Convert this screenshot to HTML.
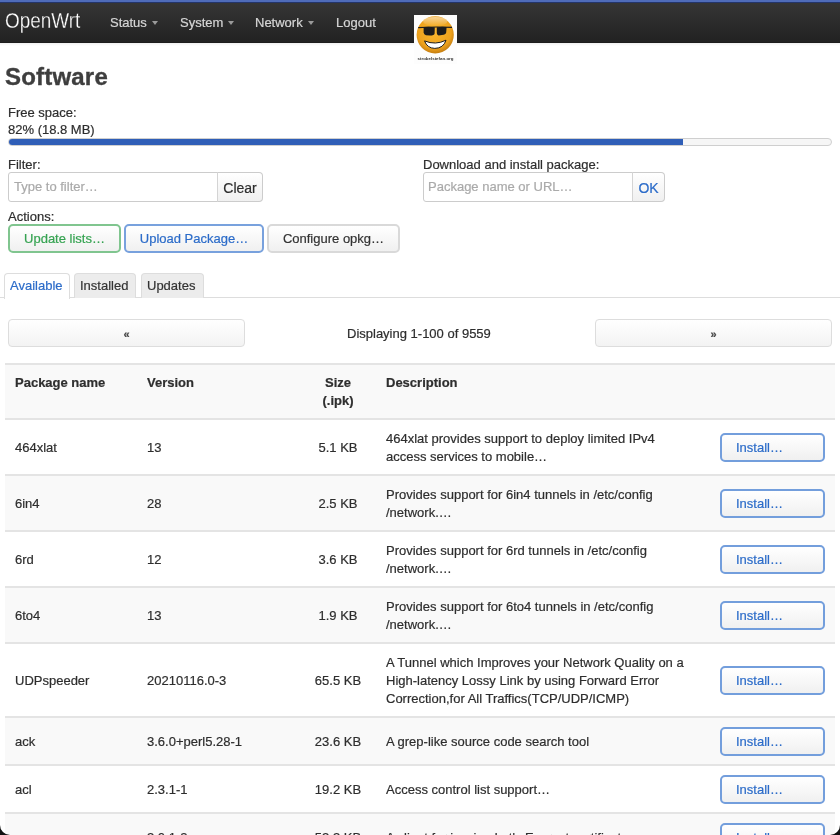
<!DOCTYPE html>
<html><head><meta charset="utf-8">
<style>
*{box-sizing:border-box;margin:0;padding:0}
html,body{width:840px;height:835px;overflow:hidden;background:#fff}
body{font-family:"Liberation Sans",sans-serif;font-size:13px;line-height:18px;color:#2e2e2e;position:relative;-webkit-text-stroke:0.2px}
.abs{position:absolute}
#topline{left:0;top:0;width:840px;height:2px;background:#4f6cb9}
#topline2{left:0;top:2px;width:840px;height:1px;background:#24356a}
#nav{left:0;top:3px;width:840px;height:40px;background:linear-gradient(#353535,#222);border-bottom:1px solid #1d1d1d}
#navshadow{left:0;top:43px;width:840px;height:3px;background:linear-gradient(rgba(0,0,0,0.06),rgba(0,0,0,0))}
#brand{left:5px;top:8px;font-size:22px;line-height:26px;color:#fff;transform-origin:0 0;transform:scaleX(0.86);letter-spacing:0;-webkit-text-stroke:0.3px #2c2c2c}
.nv{top:14px;color:#d6d6d6;font-size:13px;line-height:18px;white-space:nowrap}
.caret{display:inline-block;width:0;height:0;border-left:3.5px solid transparent;border-right:3.5px solid transparent;border-top:4px solid #9a9a9a;vertical-align:middle;margin-left:5px;position:relative;top:-1px}
#logo{left:414px;top:15px;width:43px;height:49px;background:#fdfdfd}
h2{position:absolute;left:5px;top:63px;font-size:24px;line-height:28px;font-weight:bold;color:#3e3e3e;letter-spacing:0.2px;-webkit-text-stroke:0.35px #3e3e3e}
.lbl{position:absolute;white-space:nowrap}
#bar{left:8px;top:138px;width:824px;height:8px;border:1px solid #cfcfcf;border-radius:4px;background:#f6f6f6}
#fill{left:9px;top:139px;width:674px;height:6px;background:#2f5eb7;border-radius:3px 0 0 3px}
.inp{position:absolute;height:30px;border:1px solid #ccc;border-radius:3px 0 0 3px;background:#fff;color:#aaa;padding-left:5px;line-height:28px;white-space:nowrap}
.ibtn{position:absolute;height:30px;border:1px solid #ccc;border-left:1px solid #d4d4d4;border-radius:0 4px 4px 0;background:linear-gradient(#fff,#f0f0f0);line-height:30px;text-align:center;white-space:nowrap;font-size:14px}
.btn{position:absolute;height:29px;border:2px solid #d9d9d9;border-radius:5px;background:linear-gradient(#fff,#f0f0f0);line-height:25px;text-align:center;white-space:nowrap;color:#333}
.green{border-color:#80c58f;color:#36a352}
.blue{border-color:#78a1dd;color:#2c6cc9}
.tab{position:absolute;top:273px;height:25px;border:1px solid #ddd;border-bottom:none;border-radius:4px 4px 0 0;background:#ececec;line-height:24px;padding-left:5px;white-space:nowrap;color:#333}
#tabline{left:0;top:297px;width:840px;height:1px;background:#ddd}
.pbtn{position:absolute;top:319px;height:28px;border:1px solid #ddd;border-radius:4px;background:linear-gradient(#fff,#f3f3f3);text-align:center;line-height:26px;padding-top:1px;font-size:11px;font-weight:bold;color:#444}
table{position:absolute;left:5px;top:363px;width:830px;border-collapse:collapse;table-layout:fixed}
td,th{padding:10px 10px 8px;vertical-align:middle;text-align:left;border-top:2px solid #e4e4e4}
th{font-weight:bold;background:#f9f9f9;padding-top:9px;padding-bottom:8px;vertical-align:top}
tr.r2 td{background:#f9f9f9}
td.c,th.c{text-align:center}
td:nth-child(4){padding-right:20px}
.inst{display:block;width:105px;height:29px;margin-top:-1px;border:2px solid #739edc;border-radius:5px;background:linear-gradient(#fff,#f0f0f0);color:#2c6cc9;line-height:25px;padding-left:14px;white-space:nowrap}
#cornerL{left:0;top:795px;width:40px;height:40px}
#cornerR{left:800px;top:795px;width:40px;height:40px}
</style></head><body><div style="position:absolute;left:0;top:0;width:840px;height:835px;will-change:transform;background:#fff">
<div class="abs" id="topline"></div>
<div class="abs" id="topline2"></div>
<div class="abs" id="nav"></div>
<div class="abs" id="navshadow"></div>
<div class="abs" id="brand">OpenWrt</div>
<div class="abs nv" style="left:110px">Status<span class="caret"></span></div>
<div class="abs nv" style="left:180px">System<span class="caret"></span></div>
<div class="abs nv" style="left:255px">Network<span class="caret"></span></div>
<div class="abs nv" style="left:336px">Logout</div>
<div class="abs" id="logo">
<svg width="43" height="49" viewBox="0 0 43 49">
<defs>
<radialGradient id="fg" cx="0.48" cy="0.42" r="0.62">
<stop offset="0" stop-color="#f8b62e"/><stop offset="0.72" stop-color="#eea21d"/><stop offset="1" stop-color="#b8720c"/>
</radialGradient>
<linearGradient id="hl" x1="0" y1="0" x2="0" y2="1"><stop offset="0" stop-color="#fff" stop-opacity="0.55"/><stop offset="1" stop-color="#fff" stop-opacity="0"/></linearGradient>
</defs>
<circle cx="21.2" cy="19.8" r="18.6" fill="url(#fg)"/>
<ellipse cx="21.2" cy="6.5" rx="12" ry="4.5" fill="url(#hl)"/>
<path d="M4.2 12.6 Q21 11.5 38 12.4" stroke="#1e1e1e" stroke-width="1.1" fill="none"/>
<path d="M9.6 12 Q15 11.2 20.8 12.2 L20.6 18.5 Q20.2 20.5 16 20.6 L12 20.2 Q9.8 19.6 9.6 17.2 Z" fill="#1c1c1c"/>
<path d="M22.8 12.2 Q28 11.2 32.6 12 L32.2 17.5 Q31.8 19.8 28 20.1 L24.5 20.4 Q22.8 20 22.8 18 Z" fill="#1c1c1c"/>
<path d="M10.5 25.9 Q21.5 30.5 32 25.2 Q29.5 33.2 20.8 33.4 Q13.2 33.2 10.5 25.9 Z" fill="#fff" stroke="#1a1a1a" stroke-width="1"/>
<text x="21.5" y="45.3" font-size="4.3" text-anchor="middle" fill="#333" font-family="Liberation Sans" font-weight="bold" style="-webkit-text-stroke:0" textLength="36" lengthAdjust="spacingAndGlyphs">strobelstefan.org</text>
</svg>
</div>

<h2>Software</h2>
<div class="lbl" style="left:8px;top:104px">Free space:</div>
<div class="lbl" style="left:8px;top:121px">82% (18.8 MB)</div>
<div class="abs" id="bar"></div>
<div class="abs" id="fill"></div>

<div class="lbl" style="left:8px;top:156px">Filter:</div>
<div class="inp" style="left:8px;top:172px;width:210px">Type to filter…</div>
<div class="ibtn" style="left:217px;top:172px;width:46px">Clear</div>

<div class="lbl" style="left:423px;top:156px">Download and install package:</div>
<div class="inp" style="left:423px;top:172px;width:210px;padding-left:4px">Package name or URL…</div>
<div class="ibtn" style="left:632px;top:172px;width:33px;color:#2c6cc9">OK</div>

<div class="lbl" style="left:8px;top:208px">Actions:</div>
<div class="btn green" style="left:8px;top:224px;width:113px">Update lists…</div>
<div class="btn blue" style="left:124px;top:224px;width:140px">Upload Package…</div>
<div class="btn" style="left:267px;top:224px;width:133px">Configure opkg…</div>

<div class="abs" id="tabline"></div>
<div class="tab" style="left:4px;width:66px;background:#fff;color:#2c6cc9;height:26px">Available</div>
<div class="tab" style="left:74px;width:62px">Installed</div>
<div class="tab" style="left:141px;width:63px">Updates</div>

<div class="pbtn" style="left:8px;width:237px">«</div>
<div class="lbl" style="left:347px;top:325px">Displaying 1-100 of 9559</div>
<div class="pbtn" style="left:595px;width:237px">»</div>

<table>
<colgroup><col style="width:132px"><col style="width:163px"><col style="width:76px"><col style="width:334px"><col style="width:125px"></colgroup>
<tr><th>Package name</th><th>Version</th><th class="c">Size<br>(.ipk)</th><th>Description</th><th></th></tr>
<tr class="r1"><td>464xlat</td><td>13</td><td class="c">5.1 KB</td><td>464xlat provides support to deploy limited IPv4 access services to mobile…</td><td><span class="inst">Install…</span></td></tr>
<tr class="r2"><td>6in4</td><td>28</td><td class="c">2.5 KB</td><td>Provides support for 6in4 tunnels in /etc/config /network.…</td><td><span class="inst">Install…</span></td></tr>
<tr class="r1"><td>6rd</td><td>12</td><td class="c">3.6 KB</td><td>Provides support for 6rd tunnels in /etc/config /network.…</td><td><span class="inst">Install…</span></td></tr>
<tr class="r2"><td>6to4</td><td>13</td><td class="c">1.9 KB</td><td>Provides support for 6to4 tunnels in /etc/config /network.…</td><td><span class="inst">Install…</span></td></tr>
<tr class="r1"><td>UDPspeeder</td><td>20210116.0-3</td><td class="c">65.5 KB</td><td>A Tunnel which Improves your Network Quality on a High-latency Lossy Link by using Forward Error Correction,for All Traffics(TCP/UDP/ICMP)</td><td><span class="inst">Install…</span></td></tr>
<tr class="r2"><td>ack</td><td>3.6.0+perl5.28-1</td><td class="c">23.6 KB</td><td>A grep-like source code search tool</td><td><span class="inst">Install…</span></td></tr>
<tr class="r1"><td>acl</td><td>2.3.1-1</td><td class="c">19.2 KB</td><td>Access control list support…</td><td><span class="inst">Install…</span></td></tr>
<tr class="r2"><td>acme</td><td>3.0.1-2</td><td class="c">52.3 KB</td><td>A client for issuing Let's Encrypt certificates</td><td><span class="inst">Install…</span></td></tr>
</table>

<svg class="abs" id="cornerL" width="40" height="40" viewBox="0 0 40 40"><path d="M0 30 A10 10 0 0 0 10 40 L0 40 Z" fill="#111"/></svg>
<svg class="abs" id="cornerR" width="40" height="40" viewBox="0 0 40 40"><path d="M40 30 A10 10 0 0 1 30 40 L40 40 Z" fill="#111"/></svg>
</div></body></html>
